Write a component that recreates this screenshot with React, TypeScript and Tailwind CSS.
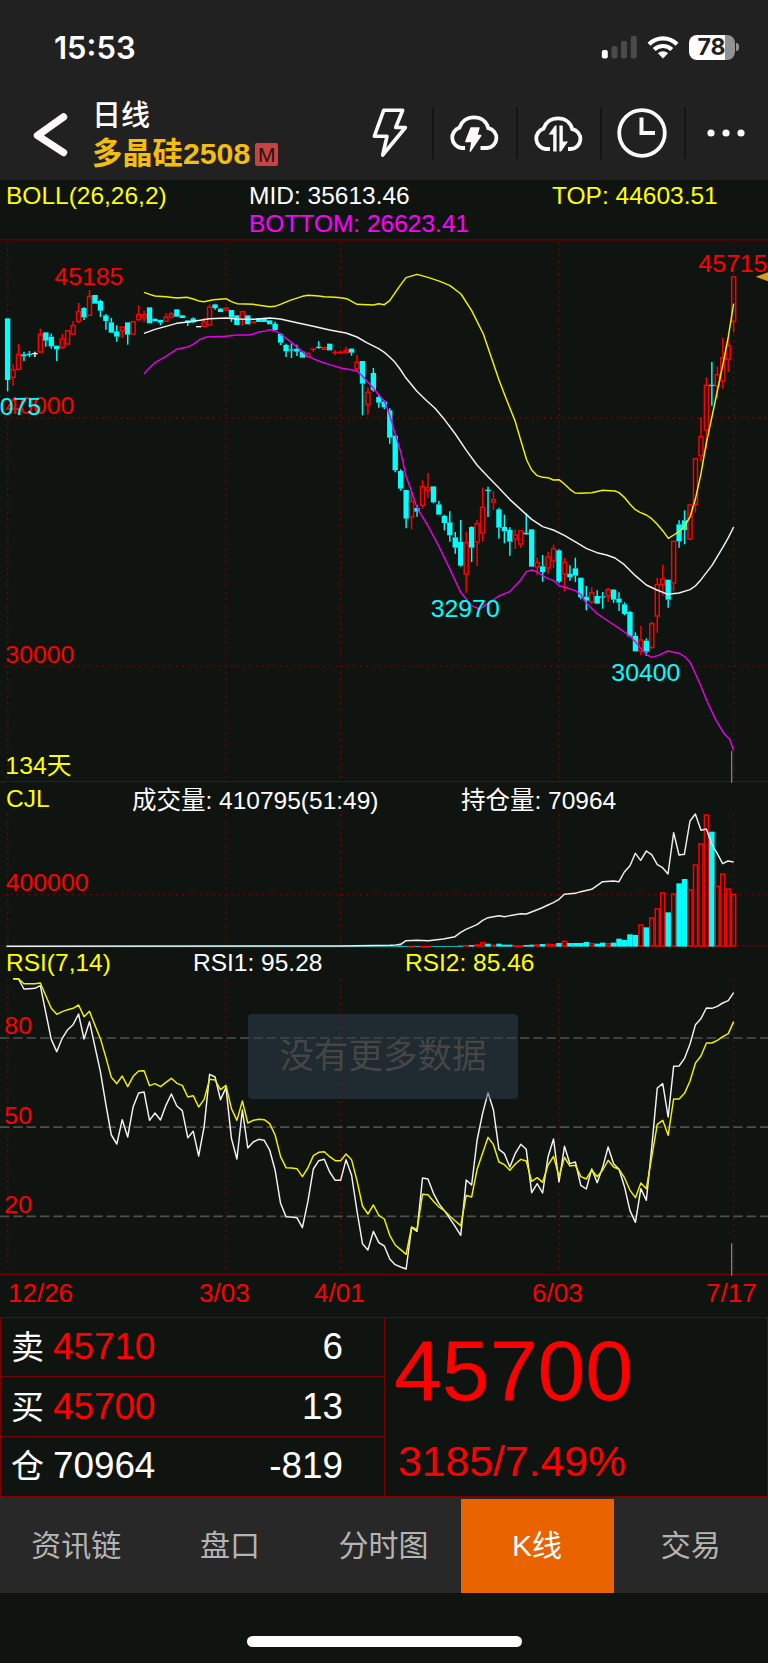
import React from "react";

type Kind = "up" | "down" | "flat";
// [kind, high, bodyTop, bodyBottom, low]
type Candle = [Kind, number, number, number, number];

const CANDLES: Candle[] = [
  ["down", 250, 250, 435, 469], ["up", 388, 403, 428, 452], ["up", 327, 357, 404, 406], ["down", 350, 358, 364, 378],
  ["down", 348, 356, 360, 366], ["flat", 350, 354, 358, 366], ["up", 281, 297, 352, 354], ["down", 292, 292, 317, 335],
  ["down", 296, 305, 334, 341], ["down", 332, 332, 343, 378], ["up", 297, 311, 338, 342], ["up", 286, 286, 328, 328],
  ["up", 258, 271, 298, 300], ["up", 204, 229, 260, 265], ["down", 217, 219, 247, 255], ["up", 165, 183, 242, 243],
  ["down", 180, 180, 206, 206], ["down", 194, 198, 227, 246], ["down", 237, 241, 258, 284], ["down", 249, 262, 293, 293],
  ["down", 271, 289, 305, 320], ["up", 275, 275, 289, 308], ["down", 262, 262, 299, 329], ["up", 259, 259, 298, 298],
  ["up", 211, 238, 255, 257], ["up", 227, 238, 249, 262], ["down", 217, 217, 265, 265], ["down", 251, 251, 259, 259],
  ["down", 254, 255, 263, 271], ["up", 235, 246, 260, 261], ["up", 231, 236, 248, 250], ["down", 223, 223, 245, 245],
  ["down", 240, 241, 249, 249], ["down", 255, 256, 264, 273], ["down", 247, 250, 262, 265], ["flat", 275, 273, 277, 275],
  ["up", 248, 260, 275, 276], ["up", 208, 215, 271, 272], ["down", 206, 208, 219, 224], ["down", 219, 221, 231, 231],
  ["up", 217, 218, 226, 226], ["down", 225, 225, 248, 261], ["down", 241, 241, 270, 270], ["up", 229, 229, 254, 272],
  ["down", 241, 241, 268, 268], ["up", 259, 260, 262, 263], ["down", 250, 250, 261, 261], ["down", 248, 249, 261, 261],
  ["down", 256, 256, 268, 268], ["down", 260, 266, 285, 287], ["down", 294, 297, 323, 330], ["down", 326, 330, 349, 366],
  ["down", 325, 343, 347, 369], ["down", 329, 341, 350, 363], ["down", 350, 350, 368, 368], ["up", 352, 354, 366, 367],
  ["up", 341, 341, 344, 350], ["down", 319, 335, 339, 341], ["up", 335, 337, 344, 344], ["down", 326, 326, 346, 346],
  ["up", 345, 351, 353, 360], ["up", 346, 351, 353, 356], ["up", 336, 345, 353, 354], ["down", 340, 341, 353, 362],
  ["up", 360, 381, 402, 410], ["down", 378, 378, 446, 541], ["up", 457, 471, 510, 539], ["down", 399, 414, 465, 470],
  ["down", 478, 486, 503, 518], ["down", 495, 500, 517, 522], ["down", 520, 526, 608, 626], ["down", 600, 602, 706, 712],
  ["down", 703, 708, 761, 767], ["down", 765, 765, 851, 880], ["up", 770, 799, 847, 883], ["down", 811, 819, 830, 845],
  ["up", 736, 754, 812, 821], ["up", 713, 757, 767, 789], ["down", 754, 754, 802, 805], ["down", 798, 808, 839, 839],
  ["down", 839, 843, 864, 886], ["down", 829, 862, 901, 920], ["down", 891, 907, 938, 956], ["down", 855, 920, 992, 995],
  ["up", 891, 922, 1018, 1073], ["down", 874, 876, 938, 981], ["up", 854, 865, 922, 993], ["up", 758, 816, 895, 919],
  ["down", 755, 764, 768, 846], ["up", 769, 793, 802, 825], ["down", 818, 823, 878, 911], ["down", 839, 876, 889, 925],
  ["down", 877, 885, 920, 962], ["up", 883, 899, 912, 942], ["up", 887, 887, 928, 939], ["down", 835, 893, 898, 899],
  ["down", 883, 883, 995, 995], ["up", 968, 982, 997, 1021], ["down", 960, 994, 1011, 1040], ["up", 950, 965, 1000, 1017],
  ["up", 929, 941, 979, 999], ["down", 943, 946, 1040, 1045], ["up", 969, 981, 1018, 1069], ["down", 991, 1016, 1027, 1037],
  ["down", 968, 1000, 1022, 1041], ["down", 1028, 1028, 1087, 1093], ["down", 1053, 1085, 1097, 1126], ["up", 1057, 1072, 1102, 1106],
  ["down", 1066, 1083, 1106, 1106], ["down", 1071, 1084, 1088, 1121], ["up", 1058, 1063, 1084, 1101], ["down", 1062, 1064, 1094, 1104],
  ["down", 1072, 1091, 1103, 1128], ["down", 1102, 1108, 1137, 1141], ["down", 1128, 1131, 1204, 1204], ["down", 1192, 1203, 1249, 1249],
  ["up", 1172, 1214, 1250, 1260], ["down", 1210, 1217, 1249, 1263], ["up", 1160, 1165, 1238, 1241], ["up", 1028, 1048, 1144, 1193],
  ["up", 989, 1031, 1049, 1082], ["down", 1034, 1034, 1094, 1118], ["up", 918, 918, 1045, 1068], ["down", 856, 868, 919, 938],
  ["down", 826, 856, 885, 928], ["up", 809, 809, 913, 916], ["up", 670, 670, 809, 833], ["up", 547, 604, 663, 680],
  ["up", 427, 450, 586, 642], ["down", 381, 449, 453, 512], ["up", 395, 418, 454, 491], ["up", 308, 367, 439, 461],
  ["up", 307, 331, 374, 411], ["up", 125, 125, 260, 292],
];

const BOLL_TOP =
  "432,172 449,178 465,183 498,185 530,189 560,187 580,192 600,199 612,200 640,194 678,191 694,200 711,206 760,208 809,215 825,214 841,208 870,196 907,184 924,181 956,183 973,185 1005,187 1022,188 1040,191 1071,208 1120,210 1136,206 1153,209 1169,197 1200,152 1218,128 1251,118 1284,127 1320,139 1350,152 1383,177 1415,227 1450,297 1497,435 1520,495 1545,557 1562,615 1580,675 1595,705 1610,721 1628,727 1644,728 1660,735 1677,734 1693,747 1710,763 1725,774 1740,775 1775,773 1808,766 1845,768 1857,773 1873,787 1890,808 1906,824 1920,832 1939,840 1955,851 1971,867 1988,887 2005,910 2021,900 2037,890 2053,874 2070,846 2086,793 2103,716 2119,624 2136,545 2152,468 2168,392 2185,305 2201,206";
const BOLL_MID =
  "432,295 465,283 498,274 530,265 563,261 600,256 629,251 678,249 711,252 760,253 809,249 841,252 891,263 940,274 989,285 1038,294 1071,306 1100,323 1136,341 1153,352 1169,366 1185,382 1200,402 1215,425 1250,468 1280,497 1305,520 1333,553 1366,597 1399,646 1431,690 1464,725 1497,759 1529,793 1562,823 1595,853 1628,875 1660,885 1693,901 1725,920 1760,941 1791,953 1820,960 1845,969 1873,989 1906,1022 1939,1050 1971,1065 2004,1078 2037,1074 2070,1064 2086,1053 2103,1034 2136,991 2168,938 2185,908 2201,876";
const BOLL_BOTTOM =
  "432,417 449,398 465,383 481,374 498,364 530,343 560,337 580,328 600,313 620,306 678,304 711,300 743,300 760,297 776,291 793,289 809,284 825,287 841,297 874,322 907,350 924,364 956,378 989,389 1022,399 1054,404 1071,408 1087,423 1104,442 1120,459 1136,480 1153,498 1169,540 1185,595 1202,650 1218,723 1235,770 1251,818 1267,845 1284,873 1317,935 1350,1003 1382,1072 1399,1093 1415,1112 1435,1121 1448,1117 1464,1105 1497,1083 1529,1070 1562,1035 1579,1010 1595,1005 1612,1011 1628,1022 1644,1031 1660,1036 1677,1052 1693,1056 1726,1067 1742,1078 1758,1103 1791,1136 1824,1158 1857,1180 1890,1203 1906,1220 1922,1240 1939,1258 1955,1267 1975,1261 2004,1248 2037,1255 2053,1264 2070,1282 2088,1320 2100,1347 2122,1401 2148,1456 2173,1497 2189,1513 2201,1547";

const OPEN_INTEREST =
  "20,403 1020,402 1170,400 1188,399 1202,397 1218,386 1250,385 1285,386 1330,381 1365,374 1382,361 1398,352 1431,338 1448,325 1464,317 1497,311 1513,314 1562,305 1579,306 1625,288 1644,279 1660,272 1677,262 1693,247 1726,244 1742,239 1775,232 1808,209 1841,207 1857,209 1873,180 1890,161 1906,124 1922,145 1939,117 1955,128 1972,158 1988,167 2004,186 2021,62 2037,129 2053,127 2070,27 2086,6 2103,55 2119,51 2135,96 2152,125 2168,155 2184,147 2201,150";

// bar heights, last 62 sessions
const VOLUMES = [
  3, 2, 2, 2, 2, 2, 2, 2, 2, 2, 2, 3, 5, 5, 7, 14, 9, 6, 9, 6, 6, 4, 4, 5, 6, 7, 8, 9, 8, 11, 18, 11, 11, 11, 14, 11, 9, 12, 11, 12, 24,
  20, 37, 35, 67, 58, 88, 115, 163, 103, 160, 190, 203, 172, 247, 310, 397, 345, 183, 220, 175, 159,
];

const RSI1 = [
  2, 3, 33, 32, 31, 23, 104, 184, 221, 181, 155, 140, 108, 183, 131, 206, 281, 379, 471, 498, 425, 477, 386, 345, 342, 427, 405, 426, 382,
  348, 384, 398, 479, 460, 534, 446, 289, 297, 365, 329, 481, 543, 396, 510, 492, 484, 487, 516, 576, 676, 716, 717, 719, 749, 671, 573,
  548, 544, 582, 607, 607, 545, 591, 699, 797, 816, 760, 794, 804, 843, 860, 867, 873, 748, 760, 600, 603, 646, 677, 698, 721, 746, 772,
  606, 621, 486, 407, 344, 396, 514, 527, 567, 526, 499, 514, 644, 617, 645, 536, 483, 612, 505, 557, 552, 622, 633, 573, 614, 568, 507,
  557, 574, 626, 698, 733, 632, 667, 506, 330, 317, 417, 265, 264, 241, 198, 140, 122, 90, 91, 85, 75, 68, 44,
];
const RSI2 = [
  2, 2, 17, 17, 17, 15, 53, 91, 109, 101, 95, 91, 81, 116, 100, 142, 182, 238, 298, 317, 294, 326, 295, 279, 278, 323, 317, 326, 313, 301,
  316, 322, 357, 353, 387, 364, 304, 306, 335, 322, 392, 427, 369, 435, 427, 424, 425, 437, 471, 536, 569, 570, 572, 596, 570, 533, 523,
  521, 536, 548, 548, 528, 545, 608, 684, 708, 681, 712, 723, 772, 801, 815, 829, 747, 755, 649, 650, 670, 687, 698, 714, 729, 743, 652,
  657, 574, 526, 478, 500, 552, 560, 577, 558, 544, 549, 610, 599, 613, 561, 535, 596, 538, 564, 562, 596, 603, 576, 596, 576, 547, 567,
  574, 599, 637, 659, 615, 632, 536, 439, 427, 472, 363, 363, 346, 309, 255, 234, 195, 195, 187, 176, 167, 131,
];

const MONTH_LINES = [23, 678, 1022, 1677, 2201];
const COLORS: Record<Kind, string> = { up: "#ff0000", down: "#00ffff", flat: "#ffffff" };
const CYAN = "#00ffff";
const RED = "#ff0000";
const GRID = "#7a0000";

const xAt = (i: number) => 22.8 + i * 16.378;
const toPoints = (values: number[]) => values.map((v, i) => `${xAt(i + 1).toFixed(1)},${v}`).join(" ");

function Grid({ top, bottom, rows = [] }: { top: number; bottom: number; rows?: number[] }) {
  return (
    <g stroke={GRID} strokeWidth={4} strokeDasharray="6 12.4">
      {MONTH_LINES.map((x) => (
        <line key={x} x1={x} x2={x} y1={top} y2={bottom} />
      ))}
      {rows.map((y) => (
        <line key={y} x1={-6} x2={2304} y1={y} y2={y} />
      ))}
    </g>
  );
}

function Label({ x, y, fill = RED, children }: { x: number; y: number; fill?: string; children: React.ReactNode }) {
  return (
    <text x={x} y={y} fill={fill} fontSize={74.5} fontFamily='"Liberation Sans", "Noto Sans CJK SC", sans-serif'>
      {children}
    </text>
  );
}

function Curve({ points, stroke }: { points: string; stroke: string }) {
  return <polyline points={points} fill="none" stroke={stroke} strokeWidth={4.4} strokeLinejoin="round" />;
}

function PriceChart() {
  return (
    <svg viewBox="0 0 2304 1644" className="block h-[548px] w-full">
      <line x1={0} x2={2304} y1={14.5} y2={14.5} stroke="#5c0000" strokeWidth={5} />
      <Grid top={22} bottom={1636} rows={[549, 1293.5]} />
      <line x1={0} x2={2304} y1={1639.5} y2={1639.5} stroke="#780000" strokeWidth={3} />
      {CANDLES.map(([kind, high, top, bottom, low], i) => {
        const x = xAt(i);
        const color = COLORS[kind];
        return (
          <g key={i} stroke={color} strokeWidth={4.4} fill={kind === "up" ? "none" : color}>
            {high < top && <line x1={x} x2={x} y1={high} y2={top} />}
            {low > bottom && <line x1={x} x2={x} y1={bottom} y2={low} />}
            {kind === "up" ? (
              <rect x={x - 6} y={top + 1} width={12} height={Math.max(bottom - top - 2, 1)} />
            ) : (
              <rect x={x - 8} y={top} width={16} height={bottom - top} stroke="none" />
            )}
          </g>
        );
      })}
      <Curve points={BOLL_MID} stroke="#f2f2f2" />
      <Curve points={BOLL_TOP} stroke="#f0f000" />
      <Curve points={BOLL_BOTTOM} stroke="#e600e6" />
      <Label x={163} y={150}>45185</Label>
      <Label x={2095} y={110}>45715</Label>
      <Label x={16} y={538}>40000</Label>
      <Label x={-1} y={541} fill={CYAN}>075</Label>
      <Label x={16} y={1283}>30000</Label>
      <Label x={1292} y={1146} fill={CYAN}>32970</Label>
      <Label x={1834} y={1337} fill={CYAN}>30400</Label>
      <Label x={16} y={1616} fill="#ffff00">134天</Label>
      <polygon points="2267,125 2304,112 2304,139" fill="#d89a1e" />
      <line x1={2195} x2={2195} y1={1548} y2={1643} stroke="#8a8a8a" strokeWidth={3.5} />
    </svg>
  );
}

function VolumeChart() {
  const first = CANDLES.length - VOLUMES.length;
  return (
    <svg viewBox="0 0 2304 408" className="block h-[136px] w-full">
      <Grid top={6} bottom={398} rows={[248]} />
      <line x1={0} x2={2304} y1={401.5} y2={401.5} stroke="#700000" strokeWidth={3} />
      <line x1={18} x2={xAt(first)} y1={404} y2={404} stroke={CYAN} strokeWidth={2} />
      {VOLUMES.map((v, i) => {
        const x = xAt(first + i);
        return CANDLES[first + i][0] === "up" ? (
          <rect key={i} x={x - 6} y={406 - v} width={12} height={Math.max(v - 4, 1)} fill="none" stroke={RED} strokeWidth={4.4} />
        ) : (
          <rect key={i} x={x - 8.2} y={404 - v} width={16.5} height={v} fill={CYAN} />
        );
      })}
      <Curve points={OPEN_INTEREST} stroke="#eeeeee" />
      <Label x={17} y={237}>400000</Label>
    </svg>
  );
}

function RsiChart() {
  return (
    <svg viewBox="0 0 2304 900" className="block h-[300px] w-full">
      <Grid top={2} bottom={886} />
      {[180, 447.5, 715].map((y) => (
        <line key={y} x1={0} x2={2304} y1={y} y2={y} stroke="#4d504e" strokeWidth={5} strokeDasharray="28 12" />
      ))}
      <line x1={0} x2={2304} y1={889.5} y2={889.5} stroke="#700000" strokeWidth={5} />
      <Curve points={toPoints(RSI1)} stroke="#f2f2f2" />
      <Curve points={toPoints(RSI2)} stroke="#f0f000" />
      <Label x={13} y={169}>80</Label>
      <Label x={13} y={437}>50</Label>
      <Label x={13} y={704}>20</Label>
      <line x1={2195} x2={2195} y1={796} y2={893} stroke="#8a8a8a" strokeWidth={3.5} />
    </svg>
  );
}

function StatusBar() {
  return (
    <div className="flex h-[94px] items-center justify-between pl-[54px] pr-[29px]">
      <span className="font-[Inter] text-[31px] leading-none font-semibold">15:53</span>
      <div className="flex items-center gap-[10px]">
        <svg viewBox="0 0 36 24" className="h-[24px] w-[36px]" fill="#4a4a4a">
          <rect x="0.8" y="15" width="6" height="8.5" rx="2" fill="#fff" />
          <rect x="10.5" y="11" width="6" height="12.5" rx="2" />
          <rect x="20" y="6" width="6" height="17.5" rx="2" />
          <rect x="29.8" y="1" width="6" height="22.5" rx="2" />
        </svg>
        <svg viewBox="0 0 32 24" className="h-[24px] w-[32px]" fill="none" stroke="#fff" strokeWidth="4.2">
          <path d="M2 9.2C9.8 1.3 22.2 1.3 30 9.2" />
          <path d="M7.2 14.6C12.2 9.8 19.8 9.8 24.8 14.6" />
          <path d="M10.9 18.2C13.8 15.5 18.2 15.5 21.1 18.2L16 23.6Z" fill="#fff" stroke="none" />
        </svg>
        <div className="flex items-center gap-[1.5px]">
          <div className="flex h-[25px] w-[46px] items-center justify-center rounded-[8px] bg-[linear-gradient(90deg,#fff_78%,#929292_78%)] font-[Inter] text-[23px] leading-none font-bold text-[#212121]">
            78
          </div>
          <div className="h-[8px] w-[3px] rounded-r-full bg-[#929292]" />
        </div>
      </div>
    </div>
  );
}

const TOOLS = [
  <svg key="flash" viewBox="0 0 36 50" className="h-[50px] w-[36px]" fill="none" stroke="#fbf9fa" strokeWidth="3.6" strokeLinejoin="round">
    <path d="M11.7 2.3H30.7L23.7 19.5H33.4L10.7 47L15 28.3H2.3Z" />
  </svg>,
  <svg key="cloud-flash" viewBox="0 0 50 37" className="h-[37px] w-[50px]" fill="none" stroke="#fbf9fa" strokeWidth="3.8">
    <path d="M16 33H12.5A10.5 10.5 0 0 1 10.5 12.6C12.5 6.5 18 2.3 25 2.3C32 2.3 37.5 6.5 39.3 13.2A10 10 0 0 1 38 33H31.5" />
    <path d="M22 13H30L27.8 20.5H31.8L21.3 36.2L23 26.5H16.8Z" fill="#fbf9fa" strokeWidth="1.4" strokeLinejoin="round" />
  </svg>,
  <svg key="cloud-sync" viewBox="0 0 50 37" className="mt-[2px] h-[37px] w-[50px]" fill="none" stroke="#fbf9fa" strokeWidth="3.8">
    <path d="M17 33H12.5A10.5 10.5 0 0 1 10.5 12.6C12.5 6.5 18 2.3 25 2.3C32 2.3 37.5 6.5 39.3 13.2A10 10 0 0 1 38 33H35" />
    <path d="M20.2 35.5V18.5H15.6L22 9.5H23.6V35.5Z" fill="#fbf9fa" stroke="none" />
    <path d="M26.4 9.5H29.8V25.5H35L28.2 35.5H26.4Z" fill="#fbf9fa" stroke="none" />
  </svg>,
  <svg key="clock" viewBox="0 0 50 50" className="h-[50px] w-[50px]" fill="none" stroke="#fbf9fa">
    <circle cx="25" cy="25" r="22.8" strokeWidth="3.8" />
    <path d="M24.5 11.5V25H36" strokeWidth="4" strokeLinecap="square" />
  </svg>,
  <svg key="more" viewBox="0 0 40 8" className="mr-[3px] h-[8px] w-[40px]" fill="#fbf9fa">
    <circle cx="5" cy="4" r="3.6" />
    <circle cx="20" cy="4" r="3.6" />
    <circle cx="35" cy="4" r="3.6" />
  </svg>,
];

function TitleBar() {
  return (
    <div className="flex h-[86px]">
      <svg viewBox="0 0 36 46" className="mt-[18px] ml-[32px] h-[46px] w-[36px] shrink-0" fill="none" stroke="#fbf9fa" strokeWidth="7.4">
        <path d="M31.5 5L5.5 23.5L31.5 40.5" strokeLinecap="round" strokeLinejoin="round" />
      </svg>
      <div className="ml-[24px] w-[257px] shrink-0">
        <div className="mt-[3px] h-[38px] text-[29px] leading-[38px] font-medium">日线</div>
        <div className="flex h-[38px] items-center gap-[5px] text-[30.3px] leading-[36px] font-bold text-[#f4bd10]">
          <span>多晶硅2508</span>
          <span className="flex h-[23px] w-[23px] items-center justify-center rounded-[2px] bg-[#c94343] text-[21px] leading-none font-medium text-[#1c1414]">
            M
          </span>
        </div>
      </div>
      <div className="mt-[13px] flex h-[52px] min-w-0 flex-1 divide-x-2 divide-[#141414]">
        {TOOLS.map((icon) => (
          <div key={icon.key} className="flex w-[84px] shrink-0 items-center justify-center pr-[2px] first:w-[85px]">
            {icon}
          </div>
        ))}
      </div>
    </div>
  );
}

const QUOTES = [
  { name: "卖", value: "45710", amount: "6", color: "text-[#ff0000]" },
  { name: "买", value: "45700", amount: "13", color: "text-[#ff0000]" },
  { name: "仓", value: "70964", amount: "-819", color: "text-white" },
];

function QuotePanel() {
  return (
    <div className="flex h-[180px] border border-[#780000]">
      <div className="flex w-[384px] flex-col divide-y divide-[#780000] border-r border-[#780000]">
        {QUOTES.map((q) => (
          <div key={q.name} className="flex h-[60px] items-center pt-[1px] pr-[41px] pl-[10px] text-[36.8px] leading-none">
            <span className="w-[42px] text-[33px]">{q.name}</span>
            <span className={q.color}>{q.value}</span>
            <span className="ml-auto">{q.amount}</span>
          </div>
        ))}
      </div>
      <div className="flex flex-col pl-[9px] text-[#ff0000]">
        <span className="mt-[9px] text-[86px] leading-[87px]">45700</span>
        <span className="mt-[26px] pl-[4px] text-[42.7px] leading-[42px]">3185/7.49%</span>
      </div>
    </div>
  );
}

const TABS = ["资讯链", "盘口", "分时图", "K线", "交易"];

function TabBar() {
  const active = "K线";
  return (
    <div className="flex h-[96px] bg-[#282828] pt-[2px] text-[30px]">
      {TABS.map((tab) => (
        <button
          key={tab}
          className={`flex flex-1 items-center justify-center pr-[1px] pb-[2px] ${
            tab === active ? "bg-[#e96300] text-white" : "text-[#b4b4b4]"
          }`}
        >
          {tab}
        </button>
      ))}
    </div>
  );
}

export default function App() {
  return (
    <div className="flex h-[1663px] w-[768px] flex-col overflow-hidden bg-[#101411] font-['Liberation_Sans','Noto_Sans_CJK_SC',sans-serif] text-white">
      <header className="h-[180px] bg-[#212121]">
        <StatusBar />
        <TitleBar />
      </header>

      <div className="grid h-[55px] grid-cols-[243px_303px_1fr] grid-rows-[28px_27px] pl-[6px] text-[24.5px] leading-[31px] whitespace-nowrap">
        <span className="text-[#ffff00]">BOLL(26,26,2)</span>
        <span>MID: 35613.46</span>
        <span className="text-[#ffff00]">TOP: 44603.51</span>
        <span className="col-start-2 text-[#ff00ff]">BOTTOM: 26623.41</span>
      </div>
      <PriceChart />

      <div className="flex h-[29px] pl-[6px] text-[24.5px] leading-[31px] whitespace-nowrap">
        <span className="w-[126px] text-[#ffff00]">CJL</span>
        <span className="mt-[2px] w-[329px]">成交量: 410795(51:49)</span>
        <span className="mt-[2px]">持仓量: 70964</span>
      </div>
      <VolumeChart />

      <div className="flex h-[30px] pl-[6px] text-[24.5px] leading-[30px] whitespace-nowrap">
        <span className="w-[187px] text-[#ffff00]">RSI(7,14)</span>
        <span className="w-[212px]">RSI1: 95.28</span>
        <span className="text-[#ffff00]">RSI2: 85.46</span>
      </div>
      <div className="relative">
        <RsiChart />
        <div className="absolute top-[36px] left-[248px] flex h-[85px] w-[270px] items-center justify-center rounded-[4px] bg-[#2e4051]/50 text-[34.5px] text-[#464646]">
          没有更多数据
        </div>
      </div>

      <div className="flex h-[39px] pl-[8px] text-[26px] leading-[30px] text-[#ff0000]">
        <span className="w-[191px]">12/26</span>
        <span className="w-[115px]">3/03</span>
        <span className="w-[218px]">4/01</span>
        <span className="w-[174px]">6/03</span>
        <span>7/17</span>
      </div>

      <QuotePanel />
      <TabBar />
      <div className="mx-auto mt-[43px] h-[11px] w-[275px] rounded-full bg-white" />
    </div>
  );
}
